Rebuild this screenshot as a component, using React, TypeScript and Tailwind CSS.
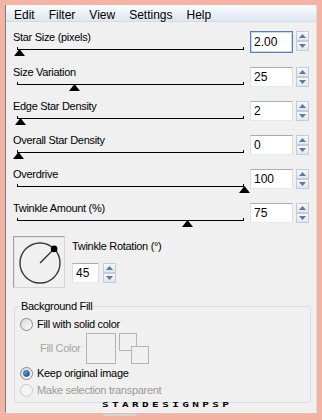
const rows = [
  { label: "Star Size (pixels)", value: "2.00", thumb: 2, h: "h-[35px]", focused: true },
  { label: "Size Variation", value: "25", thumb: 57, h: "h-[34px]" },
  { label: "Edge Star Density", value: "2", thumb: 3, h: "h-[34px]" },
  { label: "Overall Star Density", value: "0", thumb: 1, h: "h-[34px]" },
  { label: "Overdrive", value: "100", thumb: 227, h: "h-[34px]" },
  { label: "Twinkle Amount (%)", value: "75", thumb: 170, h: "h-[35px]" },
];

function Spin() {
  return (
    <div className="flex flex-col w-[13px]">
      {[0, 1].map((i) => (
        <div
          key={i}
          className="h-[10px] flex items-center justify-center border border-[#c3ccd8] bg-linear-to-b from-[#f6f8fb] to-[#dfe6ee]"
        >
          <svg width="7" height="4" viewBox="0 0 7 4">
            {i === 0 ? (
              <polygon points="0,4 3.5,0 7,4" fill="#5c77a8" />
            ) : (
              <polygon points="0,0 3.5,4 7,0" fill="#5c77a8" />
            )}
          </svg>
        </div>
      ))}
    </div>
  );
}

function Radio({ checked, disabled }: { checked?: boolean; disabled?: boolean }) {
  return (
    <span
      className={`w-[13px] h-[13px] rounded-full border flex items-center justify-center shrink-0 ${
        disabled
          ? "border-[#c9c9c9] bg-[#f4f4f4]"
          : "border-[#8b8b8b] bg-linear-to-br from-[#d9d9d9] to-[#fcfcfc]"
      }`}
    >
      {checked && (
        <span className="w-[7px] h-[7px] rounded-full bg-linear-to-br from-[#6fb8e8] to-[#0c4f8c] border border-[#1c5b8e]" />
      )}
    </span>
  );
}

function Slider({ thumb }: { thumb: number }) {
  return (
    <div className="relative ml-[4px] mt-[5px] w-[227px] h-[8px]">
      <div className="h-px bg-black" />
      <div className="absolute left-0 top-[-2px] w-px h-[3px] bg-black" />
      <div className="absolute right-0 top-[-2px] w-px h-[3px] bg-black" />
      <svg
        className="absolute top-0"
        style={{ left: thumb - 5 }}
        width="11"
        height="7"
        viewBox="0 0 11 7"
      >
        <polygon points="0,7 5.5,0 11,7" fill="#000" />
      </svg>
    </div>
  );
}

export default function App() {
  return (
    <div
      className="w-[322px] h-[420px] bg-[#f4b3a3] pt-[5px] pl-[5px] overflow-hidden text-black"
      style={{ fontFamily: "'Liberation Sans', Arial, sans-serif" }}
    >
      <div className="w-[312px] h-[408px] bg-[#f0f0f0] border-l border-l-[#7a7a7a] border-r border-b border-r-[#dcdcdc] border-b-[#fafafa] flex flex-col">
        {/* menu */}
        <div className="h-[17px] pt-[3px] pl-px flex bg-linear-to-b from-[#fdfeff] to-[#dde6f1] border-b border-[#d3dae4] text-[12px] leading-[14px]">
          {["Edit", "Filter", "View", "Settings", "Help"].map((m) => (
            <span key={m} className="px-[7px]">
              {m}
            </span>
          ))}
        </div>

        <div className="pl-[7px] pt-[8px] text-[11px] tracking-[-0.3px]">
          {rows.map((r) => (
            <div key={r.label} className={`flex ${r.h}`}>
              <div className="w-[237px] flex flex-col">
                <span className="leading-[14px]">{r.label}</span>
                <Slider thumb={r.thumb} />
              </div>
              <div
                className={`w-[43px] bg-white flex items-center pl-[3px] text-[12px] tracking-normal ${
                  r.focused
                    ? "h-[22px] mt-[1px] border border-[#5a7fb6] shadow-[inset_0_0_0_1px_#c5daf1]"
                    : "h-[20px] mt-[2px] border border-[#abadb3] border-b-[#e3e9ef] border-x-[#dbdfe6]"
                }`}
              >
                {r.value}
              </div>
              <div className={`ml-[3px] ${r.focused ? "mt-[1px]" : "mt-[2px]"}`}>
                <Spin />
              </div>
            </div>
          ))}

          {/* rotation */}
          <div className="flex h-[52px]">
            <div className="w-[52px] h-[52px] border border-[#a0a0a0] border-b-[#d6d6d6] border-r-[#d6d6d6] shadow-[inset_1px_1px_0_#e3e3e3]">
              <svg width="50" height="50" viewBox="0 0 50 50">
                <circle cx="26" cy="26" r="20" fill="none" stroke="#3a3a3a" strokeWidth="1.4" />
                <line x1="26" y1="26" x2="40.1" y2="11.9" stroke="#222" strokeWidth="1.3" />
                <circle cx="40.1" cy="11.9" r="3.3" fill="#000" />
              </svg>
            </div>
            <div className="ml-[7px] flex flex-col">
              <span className="mt-[3px] leading-[14px]">Twinkle Rotation (°)</span>
              <div className="flex mt-[10px]">
                <div className="w-[27px] h-[20px] bg-white border border-[#abadb3] border-b-[#e3e9ef] border-x-[#dbdfe6] flex items-center pl-[3px] text-[12px] tracking-normal">
                  45
                </div>
                <div className="ml-[4px]">
                  <Spin />
                </div>
              </div>
            </div>
          </div>

          {/* background fill */}
          <fieldset className="relative mt-[11px] ml-px w-[297px] border border-[#d5dfe5] rounded-[3px] pl-[5px] pb-[4px]">
            <legend className="px-px leading-[14px] text-black">Background Fill</legend>
            <div className="flex items-center gap-[4px] h-[16px] mt-[3px]">
              <Radio />
              <span>Fill with solid color</span>
            </div>
            <div className="flex items-center h-[31px] mt-px ml-[20px]">
              <span className="w-[46px] text-[#a3a3a3]">Fill Color</span>
              <div className="w-[30px] h-[31px] border border-[#b4b4b4]" />
              <div className="relative ml-[3px] w-[31px] h-[31px]">
                <div className="absolute left-0 top-0 w-[18px] h-[18px] border border-[#b4b4b4]" />
                <div className="absolute left-[12px] top-[13px] w-[18px] h-[18px] border border-[#b4b4b4] bg-[#f0f0f0]" />
              </div>
            </div>
            <div className="flex items-center gap-[4px] h-[16px] mt-px">
              <Radio checked />
              <span>Keep original image</span>
            </div>
            <div className="flex items-center gap-[4px] h-[16px] mt-px">
              <Radio disabled />
              <span className="text-[#9a9a9a]">Make selection transparent</span>
            </div>
            <span
              className="absolute left-[87px] bottom-[-6px] text-[11px] font-bold leading-[11px] tracking-[3.4px] scale-y-[0.6] origin-bottom"
              style={{ fontFamily: "'DejaVu Sans Mono', monospace" }}
            >
              STARDESIGNPSP
            </span>
          </fieldset>
        </div>
      </div>
      <div className="mt-px ml-[98px] w-[34px] h-[2px] rounded-sm bg-[#d4d4d4]" />
    </div>
  );
}
